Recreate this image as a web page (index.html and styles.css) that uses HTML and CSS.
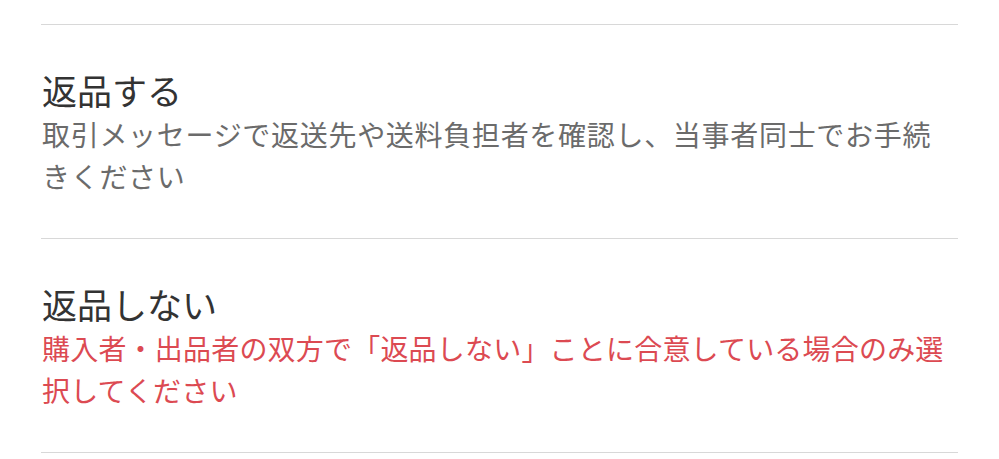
FILE: index.html
```html
<!DOCTYPE html>
<html lang="ja">
<head>
  <meta charset="UTF-8" />
  <meta name="viewport" content="width=device-width, initial-scale=1.0" />
  <title>返品</title>
  <link rel="stylesheet" href="styles.css">
</head>
<body>
  <div class="options">
    <div class="option">
      <h2>返品する</h2>
      <p class="note">取引メッセージで返送先や送料負担者を確認し、当事者同士でお手続きください</p>
    </div>
    <div class="option">
      <h2>返品しない</h2>
      <p class="note warn">購入者・出品者の双方で「返品しない」ことに合意している場合のみ選択してください</p>
    </div>
  </div>
</body>
</html>
```

FILE: styles.css
```css
* {
  margin: 0;
  padding: 0;
  box-sizing: border-box;
}
body {
  background: #fff;
  font-family: "Noto Sans CJK JP", "Noto Sans", sans-serif;
  color: #333;
}
.options {
  padding: 24px 41px 0 41px;
  width: 999px;
}
.option {
  border-top: 1px solid #d8d8d8;
  padding: 42px 0 41px 1px;
}
.option:last-child {
  border-bottom: 1px solid #d8d8d8;
}
.option h2 {
  font-size: 35px;
  font-weight: 400;
  line-height: 46px;
  color: #333;
}
.note {
  margin-top: 1px;
  font-size: 28px;
  letter-spacing: 0.7px;
  line-height: 41.5px;
  color: #6b6b6b;
}
.note.warn {
  letter-spacing: 0.2px;
  color: #dc4a52;
}
```
